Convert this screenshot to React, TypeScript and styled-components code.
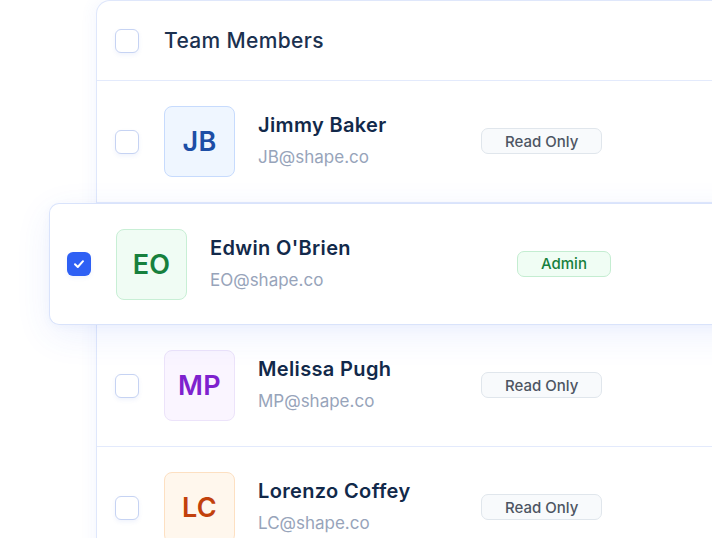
import React from "react";
import styled, { createGlobalStyle } from "styled-components";

const Global = createGlobalStyle`
  html, body {
    margin: 0;
    padding: 0;
    background: #ffffff;
    overflow: hidden;
    width: 712px;
    height: 538px;
  }
  body {
    font-family: Inter, "Noto Sans", "Liberation Sans", sans-serif;
    -webkit-font-smoothing: antialiased;
  }
`;

const Stage = styled.div`
  padding-left: 96px;
  width: 712px;
  height: 538px;
  box-sizing: border-box;
  overflow: hidden;
`;

const Table = styled.div`
  width: 760px;
  border: 1px solid #dfe7fb;
  border-right: none;
  border-bottom: none;
  border-top-left-radius: 14px;
  background: #ffffff;
  box-shadow: -4px 0 14px rgba(70, 110, 240, 0.05);
`;

const HeaderRow = styled.div`
  height: 79px;
  display: grid;
  grid-template-columns: 24px auto;
  column-gap: 25px;
  align-items: center;
  padding-left: 18px;
  border-bottom: 1px solid #e3eafc;
`;

const HeaderTitle = styled.div`
  font-size: 21px;
  font-weight: 500;
  color: #1b3150;
  letter-spacing: 0.35px;
`;

const Row = styled.div<{ $raised?: boolean; $last?: boolean }>`
  height: 121px;
  display: flex;
  align-items: center;
  padding-left: ${(p) => (p.$raised ? "17px" : "18px")};
  border-bottom: ${(p) => (p.$last ? "none" : "1px solid #e3eafc")};
  background: #ffffff;
  ${(p) =>
    p.$raised
      ? `
    position: relative;
    z-index: 1;
    margin-left: -48px;
    height: 120px;
    border: 1px solid #d9e3fb;
    border-right: none;
    border-radius: 10px 0 0 10px;
    box-shadow: 0 10px 36px rgba(60, 105, 240, 0.09), 0 2px 8px rgba(60, 105, 240, 0.04);
  `
      : ""}
`;

const Check = styled.div<{ $checked?: boolean }>`
  width: 24px;
  height: 24px;
  box-sizing: border-box;
  border-radius: 6px;
  flex: none;
  display: flex;
  align-items: center;
  justify-content: center;
  border: ${(p) => (p.$checked ? "none" : "1.5px solid #c6d3f3")};
  background: ${(p) => (p.$checked ? "#2e60f4" : "#ffffff")};
  box-shadow: 0 2px 4px rgba(60, 100, 220, 0.08);
`;

const Avatar = styled.div<{ $bg: string; $border: string; $fg: string }>`
  width: 71px;
  height: 71px;
  box-sizing: border-box;
  flex: none;
  margin-left: 25px;
  border-radius: 8px;
  background: ${(p) => p.$bg};
  border: 1.5px solid ${(p) => p.$border};
  color: ${(p) => p.$fg};
  display: flex;
  align-items: center;
  justify-content: center;
  font-size: 27px;
  font-weight: 600;
  letter-spacing: 0.3px;
`;

const Info = styled.div<{ $width: number }>`
  width: ${(p) => p.$width}px;
  margin-left: 23px;
  flex: none;
  display: flex;
  flex-direction: column;
  gap: 9px;
  margin-top: -2px;
`;

const Name = styled.div`
  font-size: 20px;
  line-height: 24px;
  font-weight: 600;
  color: #12294a;
  letter-spacing: 0.35px;
`;

const Email = styled.div`
  font-size: 17px;
  line-height: 22px;
  font-weight: 400;
  color: #97a4ba;
`;

const Badge = styled.div<{ $variant: "admin" | "read" }>`
  flex: none;
  height: 26px;
  box-sizing: border-box;
  padding: 0 23px;
  display: flex;
  align-items: center;
  border-radius: 7px;
  font-size: 15px;
  font-weight: 500;
  margin-top: -1px;
  border: 1.5px solid ${(p) => (p.$variant === "admin" ? "#c4edd1" : "#e0e6ec")};
  background: ${(p) => (p.$variant === "admin" ? "#f0fdf4" : "#f8fafc")};
  color: ${(p) => (p.$variant === "admin" ? "#17803d" : "#4d5563")};
`;

type Member = {
  initials: string;
  name: string;
  email: string;
  role: "admin" | "read";
  colors: { bg: string; border: string; fg: string };
  checked?: boolean;
  raised?: boolean;
  infoWidth: number;
};

const members: Member[] = [
  {
    initials: "JB",
    name: "Jimmy Baker",
    email: "JB@shape.co",
    role: "read",
    colors: { bg: "#eff6ff", border: "#c7dbfd", fg: "#1d4ea6" },
    infoWidth: 223,
  },
  {
    initials: "EO",
    name: "Edwin O'Brien",
    email: "EO@shape.co",
    role: "admin",
    colors: { bg: "#f0fcf4", border: "#c8efd5", fg: "#17803d" },
    checked: true,
    raised: true,
    infoWidth: 307,
  },
  {
    initials: "MP",
    name: "Melissa Pugh",
    email: "MP@shape.co",
    role: "read",
    colors: { bg: "#faf5ff", border: "#ece3fa", fg: "#7e22ce" },
    infoWidth: 223,
  },
  {
    initials: "LC",
    name: "Lorenzo Coffey",
    email: "LC@shape.co",
    role: "read",
    colors: { bg: "#fff7ed", border: "#fde0c2", fg: "#c2410c" },
    infoWidth: 223,
  },
];

const CheckMark = () => (
  <svg width="14" height="14" viewBox="0 0 14 14" fill="none">
    <path
      d="M3 7.2L5.8 10L11 4.2"
      stroke="#ffffff"
      strokeWidth="2"
      strokeLinecap="round"
      strokeLinejoin="round"
    />
  </svg>
);

export default function App() {
  return (
    <>
      <Global />
      <Stage>
        <Table>
          <HeaderRow>
            <Check />
            <HeaderTitle>Team Members</HeaderTitle>
          </HeaderRow>
          {members.map((m, i) => (
            <Row key={m.initials} $raised={m.raised} $last={i === members.length - 1}>
              <Check $checked={m.checked}>{m.checked && <CheckMark />}</Check>
              <Avatar $bg={m.colors.bg} $border={m.colors.border} $fg={m.colors.fg}>
                {m.initials}
              </Avatar>
              <Info $width={m.infoWidth}>
                <Name>{m.name}</Name>
                <Email>{m.email}</Email>
              </Info>
              <Badge $variant={m.role}>{m.role === "admin" ? "Admin" : "Read Only"}</Badge>
            </Row>
          ))}
        </Table>
      </Stage>
    </>
  );
}
